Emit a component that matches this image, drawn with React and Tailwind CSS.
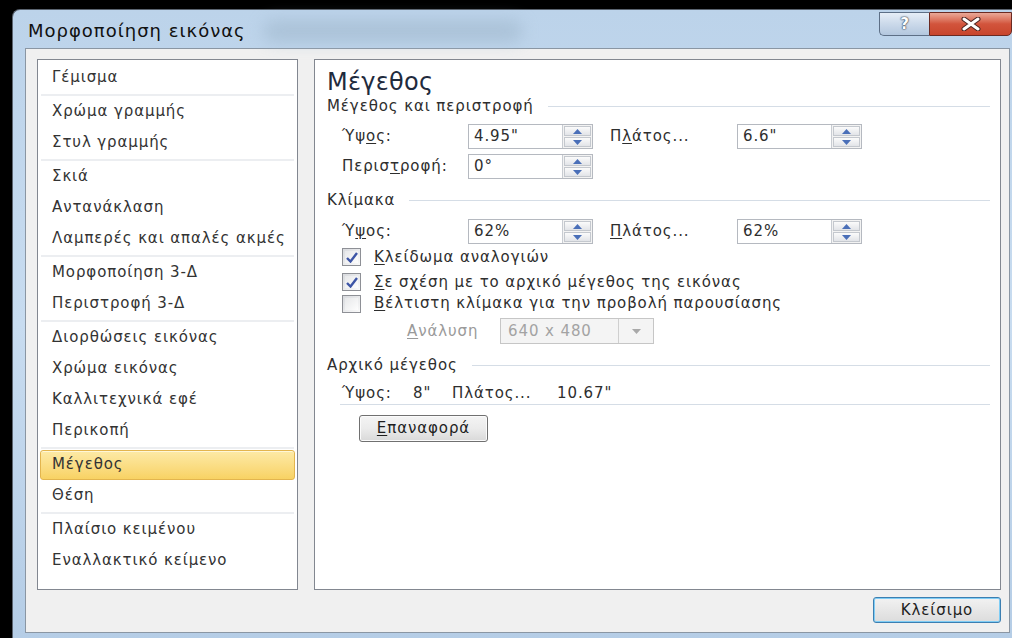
import React from 'react';

// Format Picture dialog — Size page

const FONT = { fontFamily: '"DejaVu Sans", "Noto Sans", sans-serif' };

const NAV_GROUPS = [
    ['Γέμισμα'],
    ['Χρώμα γραμμής', 'Στυλ γραμμής'],
    ['Σκιά', 'Αντανάκλαση', 'Λαμπερές και απαλές ακμές'],
    ['Μορφοποίηση 3-Δ', 'Περιστροφή 3-Δ'],
    ['Διορθώσεις εικόνας', 'Χρώμα εικόνας', 'Καλλιτεχνικά εφέ', 'Περικοπή'],
    ['Μέγεθος', 'Θέση'],
    ['Πλαίσιο κειμένου', 'Εναλλακτικό κείμενο'],
];

const ACTIVE = 'Μέγεθος';

function Key({ children }) {
    return <span className="underline underline-offset-2">{children}</span>;
}

function SectionHeader({ children }) {
    return (
        <div className="flex items-center h-[18px]">
            <span className="whitespace-nowrap">{children}</span>
            <span className="flex-1 h-px bg-[#d5dde6] ml-[14px]" />
        </div>
    );
}

function SpinBox({ value }) {
    return (
        <div className="w-[125px] h-[25px] flex border border-[#b5b9c0] bg-white">
            <span className="flex-1 pl-[5px] leading-[23px]">{value}</span>
            <div className="w-[30px] flex flex-col border-l border-[#c8ccd2] bg-[#f3f3f3] p-px gap-px">
                {['up', 'down'].map(dir => (
                    <span
                        key={dir}
                        className="flex-1 flex items-center justify-center border border-[#c4c8ce] bg-gradient-to-b from-[#fbfbfb] to-[#e2e4e8]"
                    >
                        <svg width="9" height="5" viewBox="0 0 9 5">
                            <path d={dir === 'up' ? 'M0 5 L4.5 0 L9 5 Z' : 'M0 0 L4.5 5 L9 0 Z'} fill="#4a6fb8" />
                        </svg>
                    </span>
                ))}
            </div>
        </div>
    );
}

function CheckBox({ checked }) {
    return (
        <span className="w-[19px] h-[18px] border border-[#8e9096] bg-gradient-to-br from-[#d8dade] to-[#fafafa] p-[2px] flex">
            <span className="flex-1 flex items-center justify-center bg-gradient-to-br from-[#e7e8ea] to-[#fdfdfd]">
                {checked && (
                    <svg width="12" height="11" viewBox="0 0 12 11">
                        <path d="M1 6 L4.5 9.5 L11 1" fill="none" stroke="#3d55a6" strokeWidth="2.4" />
                    </svg>
                )}
            </span>
        </span>
    );
}

function CheckRow({ checked, children, className = '' }) {
    return (
        <div className={`flex items-center ml-[15px] ${className}`}>
            <CheckBox checked={checked} />
            <span className="ml-[13px] whitespace-nowrap">{children}</span>
        </div>
    );
}

function NavList() {
    return (
        <div className="w-[261px] border border-[#828790] bg-white pt-[2px] flex flex-col">
            {NAV_GROUPS.map((group, gi) => (
                <React.Fragment key={gi}>
                    {gi > 0 && (
                        <div className="h-[3px] px-[3px] py-[0.5px]">
                            <div className="h-[2px] bg-[#eceef1]" />
                        </div>
                    )}
                    {group.map(label => (
                        <div key={label} className="h-[31px] px-[2px] flex items-center">
                            {label === ACTIVE ? (
                                <div className="flex-1 h-[30px] flex items-center pl-[11px] rounded-[3px] border border-[#e3b54e] bg-gradient-to-b from-[#fdeaa6] to-[#f8d263] shadow-[inset_0_1px_0_#fff7d6]">
                                    {label}
                                </div>
                            ) : (
                                <span className="pl-[12px] whitespace-nowrap">{label}</span>
                            )}
                        </div>
                    ))}
                </React.Fragment>
            ))}
        </div>
    );
}

function SizePage() {
    return (
        <div className="flex-1 border border-[#828790] bg-white pl-[12px] pr-[10px] flex flex-col text-[#2e2e2e]">
            <div className="mt-[9px] h-[27px] text-[24px] leading-[27px] tracking-[0.3px] text-[#1f2b3d]">Μέγεθος</div>

            <div className="mt-[1px]">
                <SectionHeader>Μέγεθος και περιστροφή</SectionHeader>
            </div>

            <div className="mt-[9px] ml-[15px] flex items-center">
                <span className="w-[126px]">Ύψ<Key>ο</Key>ς:</span>
                <SpinBox value={'4.95"'} />
                <span className="w-[127px] ml-[17px]">Π<Key>λ</Key>άτος...</span>
                <SpinBox value={'6.6"'} />
            </div>
            <div className="mt-[5px] ml-[15px] flex items-center">
                <span className="w-[126px]">Περισ<Key>τ</Key>ροφή:</span>
                <SpinBox value="0°" />
            </div>

            <div className="mt-[12px]">
                <SectionHeader>Κλίμακα</SectionHeader>
            </div>

            <div className="mt-[10px] ml-[15px] flex items-center">
                <span className="w-[126px]">Ύ<Key>ψ</Key>ος:</span>
                <SpinBox value="62%" />
                <span className="w-[127px] ml-[17px]"><Key>Π</Key>λάτος...</span>
                <SpinBox value="62%" />
            </div>

            <CheckRow checked className="mt-[2px] h-[22px]"><Key>Κ</Key>λείδωμα αναλογιών</CheckRow>
            <CheckRow checked className="mt-[3px] h-[22px]"><Key>Σ</Key>ε σχέση με το αρχικό μέγεθος της εικόνας</CheckRow>
            <CheckRow className="h-[21px]"><Key>Β</Key>έλτιστη κλίμακα για την προβολή παρουσίασης</CheckRow>

            <div className="mt-[4px] ml-[80px] flex items-center text-[#9a9a9a]">
                <span className="w-[93px]"><Key>Α</Key>νάλυση</span>
                <div className="w-[154px] h-[26px] flex border border-[#c6c6c6] bg-[#f4f4f4]">
                    <span className="flex-1 pl-[7px] leading-[24px] text-[#a3a3a3]">640 x 480</span>
                    <span className="w-[35px] border-l border-[#cfcfcf] flex items-center justify-center">
                        <svg width="9" height="5" viewBox="0 0 9 5">
                            <path d="M0 0 L4.5 5 L9 0 Z" fill="#a9a9a9" />
                        </svg>
                    </span>
                </div>
            </div>

            <div className="mt-[12px]">
                <SectionHeader>Αρχικό μέγεθος</SectionHeader>
            </div>

            <div className="mt-[10px] ml-[13px] pl-[2px] pb-[2px] h-[21px] flex items-center border-b border-[#d5dde6]">
                <span className="w-[71px]">Ύψος:</span>
                <span className="w-[39px]">8"</span>
                <span className="w-[105px]">Πλάτος...</span>
                <span>10.67"</span>
            </div>

            <button className="mt-[10px] ml-[32px] w-[129px] h-[27px] rounded-[3px] border border-[#707070] bg-gradient-to-b from-[#f4f4f4] via-[#ebebeb] to-[#d9d9d9] shadow-[inset_0_0_0_1px_#fbfbfb] text-[#1e1e1e]">
                <Key>Ε</Key>παναφορά
            </button>
        </div>
    );
}

function CaptionButtons() {
    return (
        <div className="absolute right-[2px] top-[2px] flex">
            <span className="w-[50px] h-[24px] rounded-bl-[5px] border border-[#5d6f86] border-r-0 bg-gradient-to-b from-[#e6eef7] via-[#cbd9ea] to-[#b3c7de] flex items-center justify-center">
                <span className="text-[15px] font-bold text-white tracking-normal [text-shadow:0_0_1px_#3b4a5e,0_0_1px_#3b4a5e,0_0_2px_#3b4a5e]">?</span>
            </span>
            <span className="w-[83px] h-[24px] rounded-br-[5px] border border-[#6b2a22] bg-gradient-to-b from-[#e9a898] via-[#d2543c] to-[#c8452c] flex items-center justify-center">
                <svg width="20" height="14" viewBox="0 0 20 14">
                    <path d="M3 2 L17 12 M17 2 L3 12" stroke="#4a2420" strokeWidth="5" strokeLinecap="round" />
                    <path d="M3 2 L17 12 M17 2 L3 12" stroke="#ffffff" strokeWidth="3" strokeLinecap="round" />
                </svg>
            </span>
        </div>
    );
}

export default function App() {
    return (
        <div className="w-[1012px] h-[638px] bg-black overflow-hidden pt-[9px] pl-[12px]" style={FONT}>
            <div className="w-[1002px] h-[629px] rounded-tl-[8px] border-l border-t border-[#5b6470] bg-gradient-to-b from-[#bcd3ea] via-[#c8dcf0] to-[#b5cde6] flex flex-col text-[15px] tracking-[0.9px] text-[#333]">
                {/* title bar */}
                <div className="relative h-[38px] flex items-center pl-[15px] pt-[3px]">
                    <span className="text-[18px] tracking-[1px] text-[#111]">Μορφοποίηση εικόνας</span>
                    <span className="absolute left-[250px] top-[10px] w-[260px] h-[22px] rounded-full bg-[#9fb7cc] opacity-60 blur-[8px]" />
                    <CaptionButtons />
                </div>

                {/* client area */}
                <div className="flex-1 pl-[12px] pr-[4px] pb-[5px] flex">
                    <div className="flex-1 border border-[#8a96a3] bg-[#f0f0f0] pl-[11px] pr-[8px] pt-[10px] pb-[9px] flex flex-col">
                        <div className="h-[531px] flex gap-[16px]">
                            <NavList />
                            <SizePage />
                        </div>
                        <div className="mt-[7px] flex justify-end">
                            <button className="w-[128px] h-[26px] rounded-[3px] border border-[#3c7fb1] bg-gradient-to-b from-[#f2f2f2] to-[#dcdcdc] shadow-[inset_0_0_0_1px_#7fcdf5] text-[#1e1e1e]">
                                Κλείσιμο
                            </button>
                        </div>
                    </div>
                </div>
            </div>
        </div>
    );
}
